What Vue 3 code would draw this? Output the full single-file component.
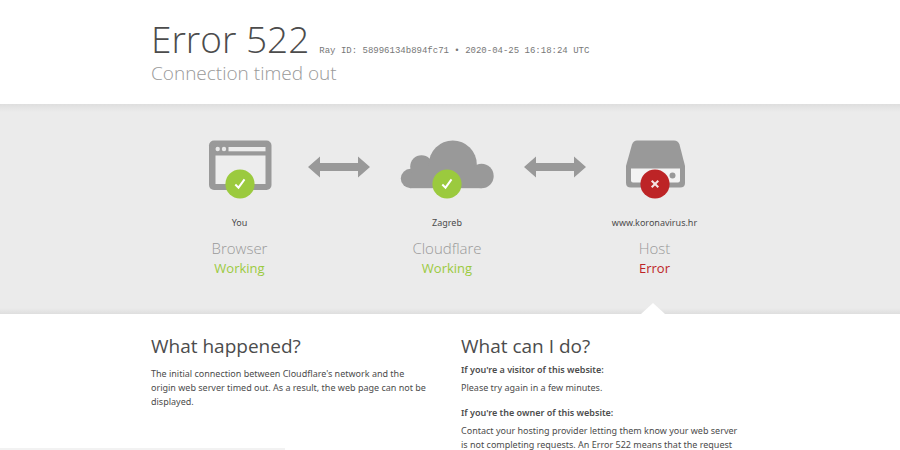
<script setup>
const stages = [
  { icon: 'browser', place: 'You', name: 'Browser', status: 'Working', ok: true },
  { icon: 'cloud', place: 'Zagreb', name: 'Cloudflare', status: 'Working', ok: true },
  { icon: 'host', place: 'www.koronavirus.hr', name: 'Host', status: 'Error', ok: false },
]
</script>

<template>
  <div class="page">
    <header class="top">
      <div class="container inset">
        <div class="title-row">
          <h1>Error 522</h1>
          <span class="ray">Ray ID: 58996134b894fc71 • 2020-04-25 16:18:24 UTC</span>
        </div>
        <p class="subtitle">Connection timed out</p>
      </div>
    </header>

    <section class="band">
      <div class="container">
        <div class="stages">
          <template v-for="(s, i) in stages" :key="s.name">
            <div class="stage" :class="{ failed: !s.ok }">
              <div class="picture">
                <svg v-if="s.icon === 'browser'" class="icon" width="96" height="60" viewBox="0 0 96 60" aria-hidden="true">
                  <rect x="17" y="0.500" width="62.500" height="49.500" rx="5" fill="#999" />
                  <rect x="23.500" y="15.500" width="50" height="28.500" fill="#ededed" />
                  <rect x="36.500" y="7" width="37" height="4.300" fill="#ededed" />
                  <circle cx="25.700" cy="9" r="2.200" fill="#e8e8e8" />
                  <circle cx="32" cy="9" r="2.200" fill="#e8e8e8" />
                </svg>
                <svg v-else-if="s.icon === 'cloud'" class="icon" width="96" height="60" viewBox="0 0 96 60" aria-hidden="true">
                  <g fill="#999">
                    <circle cx="11.500" cy="38.500" r="9.700" />
                    <circle cx="22.500" cy="26.500" r="11.300" />
                    <circle cx="53.800" cy="24.500" r="24" />
                    <circle cx="82.500" cy="36" r="12.200" />
                    <rect x="11.500" y="36" width="71" height="12.200" />
                    <rect x="16" y="27" width="60" height="14" />
                  </g>
                </svg>
                <svg v-else class="icon" width="96" height="60" viewBox="0 0 96 60" aria-hidden="true">
                  <path d="M30 0.500H67Q71 0.500 72.500 4.500L78 26V43Q78 47.500 73 47.500H24Q19 47.500 19 43V26L25 4.500Q26.500 0.500 30 0.500Z" fill="#999" />
                  <path d="M24 28.500H73V40.500Q73 42.500 71 42.500H26Q24 42.500 24 40.500Z" fill="#f3f3f3" />
                  <circle cx="65.500" cy="35.500" r="3" fill="#999" />
                </svg>
                <svg class="badge" width="30" height="30" viewBox="0 0 30 30" aria-hidden="true">
                  <circle cx="15" cy="15" r="14.600" :fill="s.ok ? '#9bca3e' : '#bd2426'" />
                  <path v-if="s.ok" d="M10.300 15.500L13.500 18.700L19.500 10.300" fill="none" stroke="#fff" stroke-width="2" />
                  <path v-else d="M11.700 11.700L18.300 18.300M18.300 11.700L11.700 18.300" fill="none" stroke="#f6e4e4" stroke-width="2" />
                </svg>
              </div>
              <span class="place">{{ s.place }}</span>
              <h3>{{ s.name }}</h3>
              <span class="status">{{ s.status }}</span>
            </div>
            <svg v-if="i < 2" class="arrow" width="62" height="22" viewBox="0 0 62 22" aria-hidden="true">
              <path d="M0 11L12 0.500V7H50V0.500L62 11L50 21.500V15H12V21.500Z" fill="#999" />
            </svg>
          </template>
        </div>
      </div>
    </section>

    <main class="container details">
      <section class="col">
        <h2>What happened?</h2>
        <p class="intro">The initial connection between Cloudflare's network and the origin web server timed out. As a result, the web page can not be displayed.</p>
      </section>
      <section class="col">
        <h2>What can I do?</h2>
        <h4>If you're a visitor of this website:</h4>
        <p>Please try again in a few minutes.</p>
        <h4>If you're the owner of this website:</h4>
        <p>Contact your hosting provider letting them know your web server is not completing requests. An Error 522 means that the request</p>
      </section>
    </main>
    <div class="status-bar"></div>
  </div>
</template>

<style>
body {
  background: #fff;
}
</style>

<style scoped>
.page {
  height: 100vh;
  overflow: hidden;
  font-family: "Open Sans", "Noto Sans", sans-serif;
  color: #4c4c4c;
}
h1, h2, h3, h4, p {
  margin: 0;
}
.container {
  box-sizing: border-box;
  max-width: 626px;
  margin: 0 auto;
  padding-right: 6px;
}
.inset {
  padding-left: 14px;
}
.top {
  padding: 16px 0 20px;
}
.title-row {
  display: flex;
  align-items: baseline;
  gap: 10px;
}
h1 {
  font-size: 37px;
  line-height: 46px;
  font-weight: 300;
}
.ray {
  font-family: "Liberation Mono", monospace;
  font-size: 9px;
  line-height: 12px;
  color: #777;
  white-space: nowrap;
}
.subtitle {
  font-size: 19px;
  line-height: 22px;
  font-weight: 300;
  color: #999;
}
.band {
  background: linear-gradient(#dedede, #ebebeb 8px, #ebebeb 204px, #dedede);
}
.stages {
  display: grid;
  grid-template-columns: 1fr 62px 154px 62px 1fr;
  padding: 0 34px;
}
.stage {
  position: relative;
  display: flex;
  flex-direction: column;
  align-items: center;
  padding: 36px 0;
  text-align: center;
}
.arrow {
  margin-top: 52px;
}
.picture {
  position: relative;
  height: 72px;
}
.icon {
  display: block;
}
.badge {
  position: absolute;
  left: 33px;
  top: 29px;
}
.place {
  font-family: "Noto Sans", sans-serif;
  font-size: 9px;
  line-height: 14px;
  margin-top: 4px;
}
h3 {
  margin-top: 8px;
  font-size: 15px;
  line-height: 20px;
  font-weight: 300;
  color: #999;
}
.status {
  font-size: 13px;
  line-height: 20px;
  color: #9bca3e;
}
.failed .status {
  color: #bd2426;
}
.failed::after {
  content: "";
  position: absolute;
  bottom: 0;
  left: 50%;
  margin-left: -14px;
  border: 12px solid transparent;
  border-top: 0;
  border-bottom: 11px solid #fff;
}
.details {
  display: grid;
  grid-template-columns: repeat(2, 1fr);
  padding-top: 18px;
}
.col {
  padding: 0 16px 0 14px;
}
h2 {
  font-size: 19px;
  line-height: 28px;
  font-weight: 400;
}
h4 {
  margin-top: 3px;
  font-family: "Noto Sans", sans-serif;
  font-size: 9px;
  line-height: 14px;
  font-weight: 600;
}
p + h4 {
  margin-top: 11px;
}
.col p {
  margin-top: 4px;
  font-family: "Noto Sans", sans-serif;
  font-size: 9px;
  line-height: 14px;
}
.col .intro {
  margin-top: 7px;
}
.status-bar {
  position: fixed;
  left: 0;
  bottom: 0;
  width: 285px;
  height: 2px;
  background: #f2f2f2;
}
</style>
